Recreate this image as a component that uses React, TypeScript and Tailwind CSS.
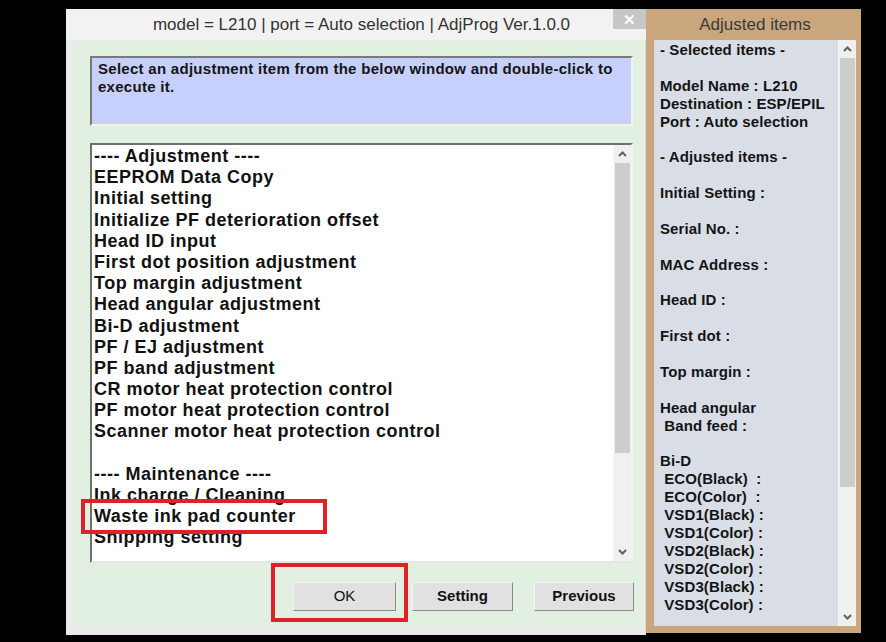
import React from 'react';

const adjustmentItems = [
  '---- Adjustment ----',
  'EEPROM Data Copy',
  'Initial setting',
  'Initialize PF deterioration offset',
  'Head ID input',
  'First dot position adjustment',
  'Top margin adjustment',
  'Head angular adjustment',
  'Bi-D adjustment',
  'PF / EJ adjustment',
  'PF band adjustment',
  'CR motor heat protection control',
  'PF motor heat protection control',
  'Scanner motor heat protection control',
  '',
  '---- Maintenance ----',
  'Ink charge / Cleaning',
  'Waste ink pad counter',
  'Shipping setting',
];

const adjustedLines = [
  '- Selected items -',
  '',
  'Model Name : L210',
  'Destination : ESP/EPIL',
  'Port : Auto selection',
  '',
  '- Adjusted items -',
  '',
  'Initial Setting :',
  '',
  'Serial No. :',
  '',
  'MAC Address :',
  '',
  'Head ID :',
  '',
  'First dot :',
  '',
  'Top margin :',
  '',
  'Head angular',
  ' Band feed :',
  '',
  'Bi-D',
  ' ECO(Black)  :',
  ' ECO(Color)  :',
  ' VSD1(Black) :',
  ' VSD1(Color) :',
  ' VSD2(Black) :',
  ' VSD2(Color) :',
  ' VSD3(Black) :',
  ' VSD3(Color) :',
];

function Chevron({ up }: { up?: boolean }) {
  return (
    <svg width="9" height="6" viewBox="0 0 9 6">
      <polyline
        points={up ? '1,5 4.5,1.5 8,5' : '1,1 4.5,4.5 8,1'}
        fill="none"
        stroke="#606060"
        strokeWidth="2"
      />
    </svg>
  );
}

function ScrollBar({ thumb }: { thumb: number }) {
  return (
    <div className="w-[18px] h-full flex flex-col bg-[#f0f0f0] border-l border-[#f8f8f8]">
      <div className="h-[18px] flex items-center justify-center">
        <Chevron up />
      </div>
      <div className="bg-[#cdcdcd] mx-[1px]" style={{ height: thumb }} />
      <div className="flex-1" />
      <div className="h-[18px] flex items-center justify-center">
        <Chevron />
      </div>
    </div>
  );
}

function Button({ label, width, bold = true }: { label: string; width: number; bold?: boolean }) {
  return (
    <button
      type="button"
      className={`h-[29px] bg-[#e1e1e1] border border-t-[#f4f4f4] border-l-[#f4f4f4] border-r-[#8a8a8a] border-b-[#8a8a8a] text-[15px] text-[#111] ${bold ? 'font-bold' : 'font-normal'}`}
      style={{ width }}
    >
      {label}
    </button>
  );
}

export default function App() {
  return (
    <div className="relative w-[886px] h-[642px] bg-black flex items-start pt-[9px] pl-[66px] font-['Liberation_Sans',Arial,sans-serif]">
      {/* main window */}
      <div className="w-[580px] h-[626px] flex flex-col">
        <div className="h-[31px] bg-[#f2f2f2] flex items-start">
          <div className="flex-1 h-full flex items-center justify-center pl-[44px] text-[17px] text-[#333]">
            model = L210 | port = Auto selection | AdjProg Ver.1.0.0
          </div>
          <div className="w-[33px] h-[20px] bg-[#c6c6c6] flex items-center justify-center text-white text-[15px] font-bold leading-none">
            ✕
          </div>
        </div>
        <div className="flex-1 bg-[#e2f0e2] border-l-[8px] border-b-[9px] border-[#ebebeb] border-r border-r-[#d8d8d8] pt-[16px] pl-[16px]">
          <div className="w-[543px] h-[70px] bg-[#c7cffc] border-2 border-t-[#7a7a7a] border-l-[#7a7a7a] border-r-[#f4f4f4] border-b-[#f4f4f4] px-[6px] pt-[2px] text-[15px] leading-[18px] font-bold tracking-[0.28px] text-[#151515]">
            Select an adjustment item from the below window and double-click to execute it.
          </div>
          <div className="mt-[17px] w-[543px] h-[420px] bg-white border-2 border-t-[#707070] border-l-[#707070] border-r-[#f4f4f4] border-b-[#e6e6e6] flex">
            <div className="flex-1 pl-[2px] pt-[1px] overflow-hidden">
              {adjustmentItems.map((item, i) => (
                <div key={i} className="h-[21.2px] leading-[21.2px] text-[18px] font-bold tracking-[0.5px] text-[#111] whitespace-pre">
                  {item}
                </div>
              ))}
            </div>
            <ScrollBar thumb={290} />
          </div>
          <div className="mt-[19px] flex pl-[203px]">
            <Button label="OK" width={103} bold={false} />
            <div className="ml-[16px]">
              <Button label="Setting" width={101} />
            </div>
            <div className="ml-[21px]">
              <Button label="Previous" width={100} />
            </div>
          </div>
        </div>
      </div>

      {/* adjusted items panel */}
      <div className="w-[215px] h-[624px] bg-[#c9a67d] flex flex-col pl-[8px] pr-[5px] pb-[7px]">
        <div className="h-[31px] flex items-center justify-center text-[17px] text-[#3a3a3a]">
          Adjusted items
        </div>
        <div className="flex-1 bg-[#d9dde6] flex">
          <div className="flex-1 pl-[6px] pt-[1px] overflow-hidden">
            {adjustedLines.map((line, i) => (
              <div key={i} className="h-[17.9px] leading-[17.9px] text-[15px] font-bold tracking-[0.1px] text-[#141414] whitespace-pre">
                {line}
              </div>
            ))}
          </div>
          <ScrollBar thumb={429} />
        </div>
      </div>

      {/* red highlight marks */}
      <div className="absolute left-[81px] top-[499px] w-[246px] h-[35px] border-4 border-[#e0212b]" />
      <div className="absolute left-[271px] top-[563px] w-[137px] h-[59px] border-4 border-[#e0212b]" />
    </div>
  );
}
